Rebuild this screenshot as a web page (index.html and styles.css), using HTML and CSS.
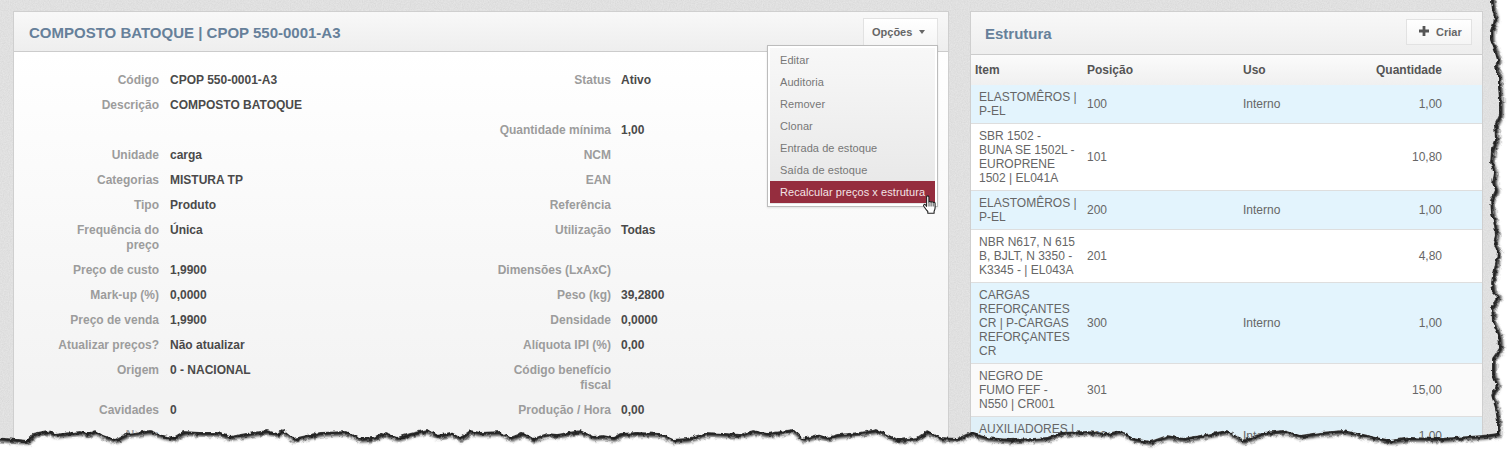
FILE: index.html
```html
<!DOCTYPE html>
<html lang="pt">
<head>
<meta charset="utf-8">
<title>Composto Batoque</title>
<link rel="stylesheet" href="styles.css">
</head>
<body>
<svg class="texture" width="1511" height="450" aria-hidden="true">
  <filter id="grain"><feTurbulence type="fractalNoise" baseFrequency="0.85" numOctaves="2" seed="4"/><feColorMatrix values="0 0 0 0 0.55  0 0 0 0 0.55  0 0 0 0 0.55  0 0 0 0.55 -0.12"/></filter>
  <rect width="1511" height="450" filter="url(#grain)"/>
</svg>
<main class="page">
  <section class="panel panel-main">
    <header class="panel-head head-main">
      <h1 class="title">COMPOSTO BATOQUE | CPOP 550-0001-A3</h1>
      <button class="btn btn-options">Opções <span class="caret"></span></button>
      <ul class="menu">
        <li class="menu-item">Editar</li>
        <li class="menu-item">Auditoria</li>
        <li class="menu-item">Remover</li>
        <li class="menu-item">Clonar</li>
        <li class="menu-item">Entrada de estoque</li>
        <li class="menu-item">Saída de estoque</li>
        <li class="menu-item active">Recalcular preços x estrutura</li>
      </ul>
      <svg class="hand" width="16" height="20" viewBox="0 0 16 20" aria-hidden="true">
        <path d="M4.6 2c0-1.5 2.3-1.5 2.3 0v5.2c.2-1 2.1-1 2.2.2.2-.9 2-.9 2.1.4.3-.7 1.900-.6 1.900.7v4.200c0 1.600-.5 2.600-1 3.600v1.900H5.800v-1.700c-1.300-1.200-2.600-3-4-5.200-.9-1.500.8-2.600 1.800-1.300l1 1.300z" fill="#fff" stroke="#222" stroke-width="1.100" stroke-linejoin="round"/>
        <path d="M7 7.500v4M9.100 7.800v3.700M11.200 8.200v3.300" fill="none" stroke="#222" stroke-width=".8"/>
      </svg>
    </header>
    <div class="details">
      <span class="lbl">Código</span><span class="val">CPOP 550-0001-A3</span><span class="lbl">Status</span><span class="val">Ativo</span>
      <span class="lbl">Descrição</span><span class="val">COMPOSTO BATOQUE</span><span class="lbl"></span><span class="val"></span>
      <span class="lbl"></span><span class="val"></span><span class="lbl">Quantidade mínima</span><span class="val">1,00</span>
      <span class="lbl">Unidade</span><span class="val">carga</span><span class="lbl">NCM</span><span class="val"></span>
      <span class="lbl">Categorias</span><span class="val">MISTURA TP</span><span class="lbl">EAN</span><span class="val"></span>
      <span class="lbl">Tipo</span><span class="val">Produto</span><span class="lbl">Referência</span><span class="val"></span>
      <span class="lbl">Frequência do preço</span><span class="val">Única</span><span class="lbl">Utilização</span><span class="val">Todas</span>
      <span class="lbl">Preço de custo</span><span class="val">1,9900</span><span class="lbl">Dimensões (LxAxC)</span><span class="val"></span>
      <span class="lbl">Mark-up (%)</span><span class="val">0,0000</span><span class="lbl">Peso (kg)</span><span class="val">39,2800</span>
      <span class="lbl">Preço de venda</span><span class="val">1,9900</span><span class="lbl">Densidade</span><span class="val">0,0000</span>
      <span class="lbl">Atualizar preços?</span><span class="val">Não atualizar</span><span class="lbl">Alíquota IPI (%)</span><span class="val">0,00</span>
      <span class="lbl">Origem</span><span class="val">0 - NACIONAL</span><span class="lbl">Código benefício fiscal</span><span class="val"></span>
      <span class="lbl">Cavidades</span><span class="val">0</span><span class="lbl">Produção / Hora</span><span class="val">0,00</span>
      <span class="lbl">Notas</span><span class="val"></span><span class="lbl"></span><span class="val"></span>
    </div>
  </section>
  <section class="panel panel-side">
    <header class="panel-head head-side">
      <h2 class="title title-side">Estrutura</h2>
      <button class="btn btn-create">
        <svg class="plus" width="10" height="10" viewBox="0 0 10 10" aria-hidden="true"><path d="M3.600 0h2.800v3.600H10v2.800H6.400V10H3.600V6.400H0V3.600h3.600z"/></svg>
        Criar
      </button>
    </header>
    <table class="grid">
      <colgroup><col class="c-item"><col class="c-pos"><col class="c-uso"><col class="c-qty"></colgroup>
      <thead><tr><th>Item</th><th>Posição</th><th>Uso</th><th class="num">Quantidade</th></tr></thead>
      <tbody>
        <tr class="odd"><td>ELASTOMÊROS | P-EL</td><td>100</td><td>Interno</td><td class="num">1,00</td></tr>
        <tr><td>SBR 1502 - BUNA SE 1502L - EUROPRENE 1502 | EL041A</td><td>101</td><td></td><td class="num">10,80</td></tr>
        <tr class="odd"><td>ELASTOMÊROS | P-EL</td><td>200</td><td>Interno</td><td class="num">1,00</td></tr>
        <tr><td>NBR N617, N 615 B, BJLT, N 3350 - K3345 - | EL043A</td><td>201</td><td></td><td class="num">4,80</td></tr>
        <tr class="odd"><td>CARGAS REFORÇANTES CR | P-CARGAS REFORÇANTES CR</td><td>300</td><td>Interno</td><td class="num">1,00</td></tr>
        <tr class="low"><td>NEGRO DE FUMO FEF - N550 | CR001</td><td>301</td><td></td><td class="num">15,00</td></tr>
        <tr class="odd low-odd"><td>AUXILIADORES | P-AUX</td><td>400</td><td>Interno</td><td class="num">1,00</td></tr>
      </tbody>
    </table>
  </section>
</main>
<svg class="torn" width="1511" height="450" viewBox="0 0 1511 450" aria-hidden="true">
  <defs>
    <path id="edge" d="M1491 -6L1491 3 1492 10 1494 17 1493 23 1490 30 1490 40 1494 50 1497 60 1494 68 1498 75 1498 87 1499 100 1499 115 1494 125 1495 140 1491 150 1490 163 1494 173 1492 182 1495 190 1490 200 1491 213 1494 225 1495 235 1493 242 1497 252 1496 258 1494 268 1491 282 1492 292 1497 297 1491 305 1492 322 1498 335 1499 348 1492 358 1492 375 1496 385 1491 395 1495 408 1497 422 1497 433 1483 435 1440 438 1410 437 1390 440 1367 435 1343 430 1320 432 1300 435 1283 430 1263 432 1243 440 1227 430 1200 435 1183 438 1167 435 1150 441 1133 438 1120 430 1107 433 1087 431 1060 432 1047 437 1033 438 1010 439 987 437 970 432 957 438 940 437 927 430 917 437 897 439 877 429 860 432 837 434 827 437 817 434 803 438 793 429 767 433 753 430 740 434 707 432 687 438 673 439 660 433 637 432 620 433 613 437 603 435 593 436 580 430 557 434 547 433 533 438 523 432 510 437 500 431 480 432 470 430 460 437 450 432 437 435 427 429 410 433 397 437 383 432 373 437 360 438 347 431 320 432 293 438 282 429 277 433 267 430 247 433 230 436 217 432 200 432 183 431 173 437 163 435 150 430 127 433 115 439 103 435 95 430 87 433 80 431 62 433 55 434 47 430 33 433 27 440 17 439 -6 437"/>
    <clipPath id="outside"><path clip-rule="evenodd" d="M-10 -10H1521V460H-10ZM1491 -10L1491 3 1492 10 1494 17 1493 23 1490 30 1490 40 1494 50 1497 60 1494 68 1498 75 1498 87 1499 100 1499 115 1494 125 1495 140 1491 150 1490 163 1494 173 1492 182 1495 190 1490 200 1491 213 1494 225 1495 235 1493 242 1497 252 1496 258 1494 268 1491 282 1492 292 1497 297 1491 305 1492 322 1498 335 1499 348 1492 358 1492 375 1496 385 1491 395 1495 408 1497 422 1497 433 1483 435 1440 438 1410 437 1390 440 1367 435 1343 430 1320 432 1300 435 1283 430 1263 432 1243 440 1227 430 1200 435 1183 438 1167 435 1150 441 1133 438 1120 430 1107 433 1087 431 1060 432 1047 437 1033 438 1010 439 987 437 970 432 957 438 940 437 927 430 917 437 897 439 877 429 860 432 837 434 827 437 817 434 803 438 793 429 767 433 753 430 740 434 707 432 687 438 673 439 660 433 637 432 620 433 613 437 603 435 593 436 580 430 557 434 547 433 533 438 523 432 510 437 500 431 480 432 470 430 460 437 450 432 437 435 427 429 410 433 397 437 383 432 373 437 360 438 347 431 320 432 293 438 282 429 277 433 267 430 247 433 230 436 217 432 200 432 183 431 173 437 163 435 150 430 127 433 115 439 103 435 95 430 87 433 80 431 62 433 55 434 47 430 33 433 27 440 17 439 -10 437 -10 -10Z"/></clipPath>
    <filter id="soft" x="-5%" y="-5%" width="110%" height="110%"><feGaussianBlur stdDeviation="1.500"/></filter>
    <filter id="rough" x="0" y="0" width="100%" height="100%"><feTurbulence type="fractalNoise" baseFrequency="0.22" numOctaves="2" seed="7"/><feDisplacementMap in="SourceGraphic" scale="4" xChannelSelector="R" yChannelSelector="G"/></filter>
  </defs>
  <g filter="url(#rough)">
    <g clip-path="url(#outside)">
      <rect x="-10" y="-10" width="1531" height="470" fill="#fff"/>
      <use href="#edge" fill="none" stroke="#0c0c0c" stroke-width="5" filter="url(#soft)" transform="translate(1.500 1.500)"/>
    </g>
  </g>
</svg>
</body>
</html>
```
FILE: styles.css
```css
* { box-sizing: border-box; }
html, body { margin: 0; height: 450px; overflow: hidden; }
body {
  position: relative;
  background: #e5e5e5;
  font-family: "Liberation Sans", Arial, sans-serif;
  font-size: 12px;
  line-height: 14px;
  color: #555;
}
.texture { position: absolute; left: 0; top: 0; }
.torn { position: absolute; left: 0; top: 0; pointer-events: none; z-index: 5; }
.page {
  position: relative;
  display: flex;
  gap: 21px;
  padding: 11px 0 0 13px;
  height: 450px;
}
.panel {
  border: 1px solid #cfcfcf;
  background: linear-gradient(#fff 40px, #f3f3f3 380px);
  height: 460px;
}
.panel-main { width: 936px; flex: none; }
.panel-side { width: 513px; flex: none; overflow: hidden; }
.panel-head {
  position: relative;
  display: flex;
  justify-content: space-between;
  align-items: flex-start;
  background: linear-gradient(#f8f8f8, #eeeeee);
  border-bottom: 1px solid #cccccc;
}
.head-main { height: 40px; padding: 6px 10px 0 15px; }
.head-side { height: 43px; padding: 7px 10px 0 14px; }
.title {
  margin: 6px 0 0;
  font-size: 15px;
  line-height: 18px;
  font-weight: bold;
  color: #66809a;
}
.title-side { margin-top: 6px; }
.btn {
  font-family: inherit;
  font-size: 11px;
  font-weight: bold;
  color: #666;
  border: 1px solid #e2e2e2;
  background: linear-gradient(#ffffff, #f5f5f5);
  padding: 0;
  display: flex;
  align-items: center;
}
.btn-options { width: 75px; height: 27px; padding: 0 0 1px 8px; border-bottom: 0; }
.caret {
  width: 0;
  height: 0;
  margin: 1px 0 0 7px;
  border-left: 3px solid transparent;
  border-right: 3px solid transparent;
  border-top: 4px solid #666;
}
.btn-create { width: 66px; height: 26px; padding-left: 12px; color: #666; }
.plus { margin-right: 7px; margin-top: -3px; fill: #555; }
.menu {
  position: absolute;
  top: 33px;
  right: 10px;
  z-index: 3;
  width: 171px;
  margin: 0;
  padding: 3px 2px;
  list-style: none;
  background: linear-gradient(#f8f8f8, #e6e6e6);
  border: 1px solid #bcbcbc;
  box-shadow: inset 0 0 0 2px #fff, 0 1px 2px rgba(0, 0, 0, .1);
}
.menu-item {
  height: 22px;
  padding-left: 10px;
  font-size: 11px;
  line-height: 22px;
  letter-spacing: .07px;
  color: #777;
  white-space: nowrap;
}
.menu-item.active { background: #952d3e; color: #f3e4e6; }
.hand { position: absolute; top: 183px; right: 10px; z-index: 4; }
.details {
  display: grid;
  grid-template-columns: 114px 316px 114px 1fr;
  column-gap: 11px;
  row-gap: 10px;
  padding: 21px 0 0 31px;
  line-height: 15px;
}
.lbl { text-align: right; font-weight: bold; color: #9c9c9c; min-height: 15px; }
.val { font-weight: bold; color: #4a4a4a; min-height: 15px; }
.val:nth-child(4n) { margin-left: -1px; }
.grid { width: 511px; table-layout: fixed; border-collapse: collapse; }
.c-item { width: 111px; }
.c-pos { width: 156px; }
.c-uso { width: 100px; }
.c-qty { width: 144px; }
.grid th {
  height: 30px;
  padding: 0 5px;
  text-align: left;
  font-weight: bold;
  color: #555;
  background: linear-gradient(#fbfbfb, #f0f0f0);
}
.grid th:first-child { padding-left: 4px; }
.grid td {
  padding: 5px;
  vertical-align: middle;
  color: #666;
  border-bottom: 1px solid #dedede;
  background: #fff;
}
.grid td:first-child { padding-left: 8px; padding-right: 5px; }
.grid .num { text-align: right; padding-right: 40px; }
.grid .odd td { background: #e3f4fd; }
.grid .low td { background: #fafafa; }
.grid .low-odd td { background: #e0f0f8; }
```
